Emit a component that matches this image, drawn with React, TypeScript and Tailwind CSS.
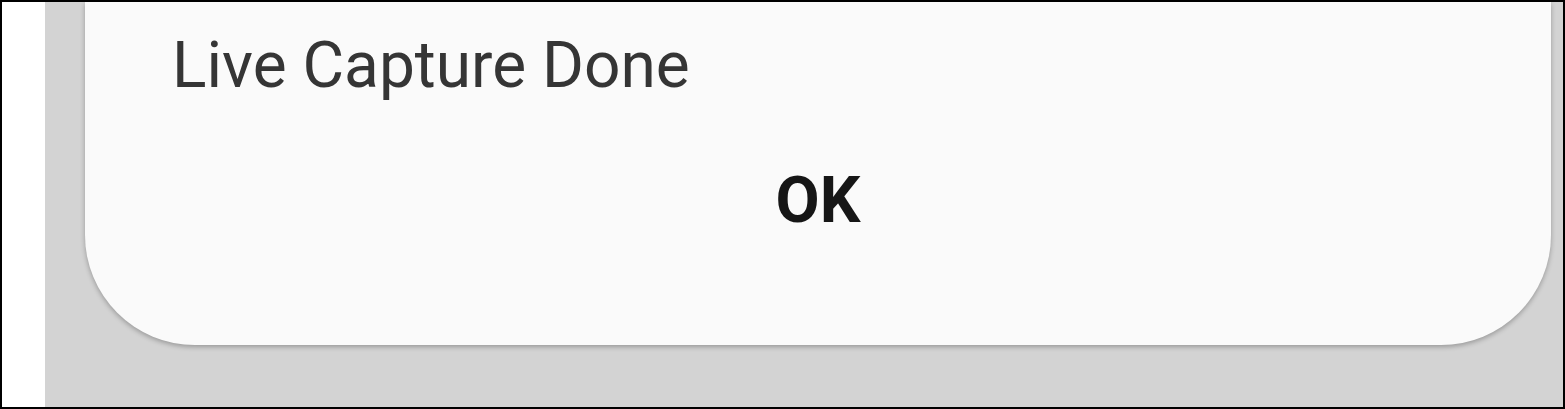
import React from "react";

export default function App() {
  return (
    <div className="w-[1565px] h-[409px] border-2 border-black bg-white flex overflow-hidden box-border">
      <div className="w-[43px] h-full bg-white shrink-0" />
      <div className="flex-1 h-full bg-[#d3d3d3] pl-[40px] pr-[12px]">
        <div
          className="h-[343px] bg-[#fafafa] rounded-b-[110px] shadow-[0_2px_5px_rgba(0,0,0,0.28)] flex flex-col pt-[32px]"
          style={{ fontFamily: "Roboto, 'Noto Sans', sans-serif" }}
        >
          <div className="pl-[87px] text-[64px] leading-[64px] text-[#353535]">Live Capture Done</div>
          <div className="mt-[71px] text-center text-[64px] leading-[64px] font-bold text-[#161616]">OK</div>
        </div>
      </div>
    </div>
  );
}
